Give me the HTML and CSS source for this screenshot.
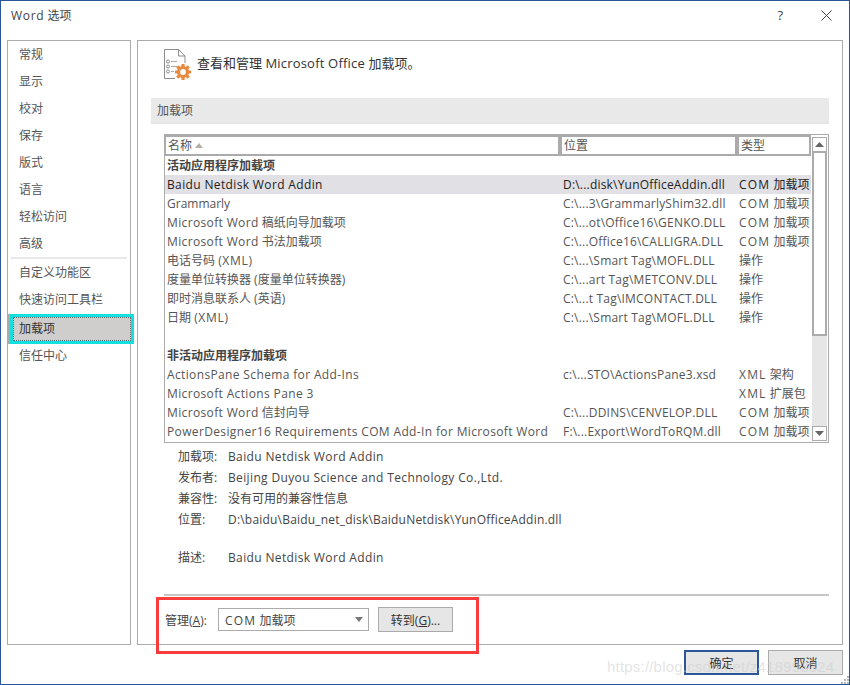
FILE: index.html
```html
<!DOCTYPE html>
<html lang="zh-CN">
<head>
<meta charset="utf-8">
<title>Word 选项</title>
<link rel="stylesheet" href="styles.css">
</head>
<body>
<div class="dialog">
  <header class="titlebar">
    <span class="title"><span class="wide">Word</span> 选项</span>
    <span class="help">?</span>
    <svg class="close" width="11" height="11" viewBox="0 0 11 11"><path d="M.5.5l10 10M10.500.5l-10 10" stroke="#444" stroke-width="1" fill="none"/></svg>
  </header>
  <div class="main">
    <nav class="nav">
      <div class="nav-item">常规</div>
      <div class="nav-item">显示</div>
      <div class="nav-item">校对</div>
      <div class="nav-item">保存</div>
      <div class="nav-item">版式</div>
      <div class="nav-item">语言</div>
      <div class="nav-item">轻松访问</div>
      <div class="nav-item">高级</div>
      <div class="nav-sep"></div>
      <div class="nav-item">自定义功能区</div>
      <div class="nav-item">快速访问工具栏</div>
      <div class="nav-active"><span class="nav-inner">加载项</span></div>
      <div class="nav-item">信任中心</div>
    </nav>
    <section class="content">
      <div class="head">
        <svg class="head-icon" width="30" height="32" viewBox="0 0 30 32">
          <path d="M11 29.500H.5V.5h14l6.500 6.500v7" fill="none" stroke="#8c8c8c"/>
          <path d="M14.500.5v6.500H21" fill="none" stroke="#8c8c8c"/>
          <path d="M7 12.500h6M7 17.500h6M7 22.500h3" stroke="#a8a8a8" fill="none"/>
          <circle cx="4" cy="12.500" r="1.500" fill="none" stroke="#8c8c8c"/>
          <circle cx="4" cy="17.500" r="1.500" fill="none" stroke="#8c8c8c"/>
          <circle cx="4" cy="22.500" r="1.500" fill="none" stroke="#8c8c8c"/>
          <path d="M19 15v16M11 23h16M13.300 17.300l11.400 11.400M24.700 17.300L13.300 28.700" stroke="#ea8a3e" stroke-width="3.200"/>
          <circle cx="19" cy="23" r="4.500" fill="none" stroke="#ea8a3e" stroke-width="3.200"/>
          <circle cx="19" cy="23" r="2.900" fill="#fff"/>
        </svg>
        <span class="head-text">查看和管理 <span class="en-soft">Microsoft Office</span> 加载项。</span>
      </div>
      <div class="section-bar">加载项</div>
      <div class="list">
        <div class="list-body">
          <div class="list-head">
            <span class="col-head">名称<svg class="sort" width="8" height="5" viewBox="0 0 8 5"><path d="M4 0l4 5H0z" fill="#b5b0a6"/></svg></span>
            <span class="col-head">位置</span>
            <span class="col-head">类型</span>
          </div>
          <div class="row group">活动应用程序加载项</div>
          <div class="row selected"><span class="en">Baidu Netdisk Word Addin</span><span>D:\...disk\YunOfficeAddin.dll</span><span><span class="caps">COM</span> 加载项</span></div>
          <div class="row"><span>Grammarly</span><span>C:\...3\GrammarlyShim32.dll</span><span><span class="caps">COM</span> 加载项</span></div>
          <div class="row"><span><span class="en">Microsoft Word</span> 稿纸向导加载项</span><span>C:\...ot\Office16\GENKO.DLL</span><span><span class="caps">COM</span> 加载项</span></div>
          <div class="row"><span><span class="en">Microsoft Word</span> 书法加载项</span><span>C:\...Office16\CALLIGRA.DLL</span><span><span class="caps">COM</span> 加载项</span></div>
          <div class="row"><span>电话号码 <span class="wide">(XML)</span></span><span>C:\...\Smart Tag\MOFL.DLL</span><span>操作</span></div>
          <div class="row"><span>度量单位转换器 (度量单位转换器)</span><span>C:\...art Tag\METCONV.DLL</span><span>操作</span></div>
          <div class="row"><span>即时消息联系人 (英语)</span><span>C:\...t Tag\IMCONTACT.DLL</span><span>操作</span></div>
          <div class="row"><span>日期 <span class="wide">(XML)</span></span><span>C:\...\Smart Tag\MOFL.DLL</span><span>操作</span></div>
          <div class="row"></div>
          <div class="row group">非活动应用程序加载项</div>
          <div class="row"><span class="en">ActionsPane Schema for Add-Ins</span><span>c:\...STO\ActionsPane3.xsd</span><span><span class="caps">XML</span> 架构</span></div>
          <div class="row"><span class="en">Microsoft Actions Pane 3</span><span></span><span><span class="caps">XML</span> 扩展包</span></div>
          <div class="row"><span><span class="en">Microsoft Word</span> 信封向导</span><span>C:\...DDINS\CENVELOP.DLL</span><span><span class="caps">COM</span> 加载项</span></div>
          <div class="row"><span class="en">PowerDesigner16 Requirements COM Add-In for Microsoft Word</span><span>F:\...Export\WordToRQM.dll</span><span><span class="caps">COM</span> 加载项</span></div>
        </div>
        <div class="scrollbar">
          <div class="sb-btn"><svg width="9" height="5" viewBox="0 0 9 5"><path d="M4.500 0L9 5H0z" fill="#666"/></svg></div>
          <div class="sb-thumb"></div>
          <div class="sb-track"></div>
          <div class="sb-btn"><svg width="9" height="5" viewBox="0 0 9 5"><path d="M0 0h9L4.500 5z" fill="#666"/></svg></div>
        </div>
      </div>
      <dl class="details">
        <div class="detail"><dt>加载项:</dt><dd class="en">Baidu Netdisk Word Addin</dd></div>
        <div class="detail"><dt>发布者:</dt><dd class="en">Beijing Duyou Science and Technology Co.,Ltd.</dd></div>
        <div class="detail"><dt>兼容性:</dt><dd>没有可用的兼容性信息</dd></div>
        <div class="detail"><dt>位置:</dt><dd class="en-soft">D:\baidu\Baidu_net_disk\BaiduNetdisk\YunOfficeAddin.dll</dd></div>
        <div class="detail detail-desc"><dt>描述:</dt><dd class="en">Baidu Netdisk Word Addin</dd></div>
      </dl>
      <div class="manage">
        <label class="manage-label">管理(<u>A</u>):</label>
        <div class="select"><span><span class="caps">COM</span> 加载项</span><svg width="8" height="5" viewBox="0 0 8 5"><path d="M0 0h8L4 5z" fill="#777"/></svg></div>
        <button class="btn go">转到(<u>G</u>)...</button>
      </div>
    </section>
  </div>
  <footer class="footer">
    <button class="btn action primary">确定</button>
    <button class="btn action">取消</button>
  </footer>
  <div class="annotation"></div>
  <div class="watermark">https://blog.csdn.net/z418993324</div>
  <svg class="grip" width="9" height="9" viewBox="0 0 9 9"><path d="M7 1h2v2H7zM4 4h2v2H4zM7 4h2v2H7zM1 7h2v2H1zM4 7h2v2H4zM7 7h2v2H7z" fill="#b8b8b8"/></svg>
</div>
</body>
</html>
```
FILE: styles.css
```css
* { box-sizing: border-box; }
html, body { margin: 0; padding: 0; }
body {
  width: 850px;
  height: 685px;
  overflow: hidden;
  background: #fff;
  font-family: "Open Sans", "Noto Sans CJK SC", sans-serif;
  font-size: 12px;
  color: #444;
}
.en { letter-spacing: .36px; }
.en-soft { letter-spacing: .2px; }
.wide { letter-spacing: .7px; }
.caps { letter-spacing: 1.2px; }
.dialog {
  position: relative;
  width: 850px;
  height: 685px;
  border: 1px solid #2b579a;
  display: flex;
  flex-direction: column;
  background: #fff;
}
.titlebar {
  height: 39px;
  flex: none;
  display: flex;
  align-items: center;
  padding: 0 17px 11px 10px;
}
.title { font-size: 12px; color: #444; flex: 1; }
.help { font-size: 13px; margin-right: 38px; color: #444; }
.close { display: block; }
.main {
  flex: none;
  height: 605px;
  display: flex;
  gap: 6px;
  padding: 0 6px;
}
.nav {
  width: 124px;
  border: 1px solid #ababab;
}
.nav-item {
  height: 27px;
  line-height: 27px;
  padding-left: 11px;
  color: #555;
}
.nav-sep { height: 2px; background: #e8e8e8; margin: 0 3px; }
.nav-active {
  height: 24px;
  margin: 4px -1px 1px 5px;
  outline: 3px solid #14dede;
  background: #d0cecd;
  box-shadow: -3px 0 0 3px #ababab;
}
.nav-inner {
  display: block;
  height: 100%;
  line-height: 22px;
  padding-left: 5px;
  border: 1px dotted #666;
  color: #333;
}
.content {
  width: 706px;
  border: 1px solid #ababab;
  display: flex;
  flex-direction: column;
  padding: 0 13px;
}
.head {
  height: 57px;
  flex: none;
  display: flex;
  align-items: flex-start;
  padding: 8px 0 0 13px;
}
.head-icon { display: block; flex: none; margin-right: 3px; }
.head-text { font-size: 13px; line-height: 28px; color: #333; }
.section-bar {
  height: 26px;
  flex: none;
  line-height: 25px;
  background: #e9e9e9;
  border-bottom: 1px solid #e2e2e2;
  padding-left: 6px;
  color: #555;
}
.list {
  width: 665px;
  height: 309px;
  flex: none;
  margin: 10px 0 0 13px;
  border: 1px solid #ababab;
  display: flex;
}
.list-body { width: 646px; flex: none; overflow: hidden; }
.list-head {
  height: 21px;
  display: grid;
  grid-template-columns: 392px 173px 70px;
  column-gap: 4px;
  background: #ababab;
  padding: 2px 2px 2px 1px;
}
.col-head {
  background: #fff;
  padding-left: 2px;
  line-height: 17px;
  color: #555;
  display: flex;
  align-items: center;
  gap: 3px;
}
.row {
  height: 19px;
  line-height: 19px;
  display: grid;
  grid-template-columns: 396px 176px 72px;
  padding-left: 2px;
  white-space: nowrap;
  color: #555;
}
.row > span { overflow: hidden; }
.row > span:nth-child(2) { letter-spacing: .2px; }
.row.group { display: block; font-weight: 700; color: #444; }
.row.selected { background: #e1e0e5; color: #222; }
.scrollbar {
  flex: 1;
  display: flex;
  flex-direction: column;
  padding: 2px 1px 1px 0;
  margin-left: 1px;
}
.sb-btn {
  height: 15px;
  flex: none;
  border: 1px solid #ababab;
  display: flex;
  align-items: center;
  justify-content: center;
  background: #fff;
}
.sb-thumb {
  height: 184px;
  flex: none;
  border: 2px solid #ababab;
  border-top-width: 1px;
  background: #fff;
}
.sb-track { flex: 1; background: #e6e6e6; }
.details {
  margin: 3px 0 0 27px;
  padding: 0;
}
.detail {
  height: 21px;
  line-height: 21px;
  display: flex;
}
.detail dt { width: 50px; }
.detail dd { margin: 0; }
.detail-desc { margin-top: 17px; }
.manage {
  height: 49px;
  flex: none;
  width: 665px;
  margin: 26px 0 0 13px;
  border-top: 2px solid #c6c6c6;
  display: flex;
  align-items: center;
  padding-left: 1px;
}
.manage-label { width: 53px; flex: none; }
.select {
  width: 151px;
  height: 23px;
  border: 1px solid #ababab;
  display: flex;
  align-items: center;
  justify-content: space-between;
  padding: 0 5px 0 6px;
  margin-right: 9px;
}
.btn {
  font: inherit;
  color: #333;
  background: #e6e6e6;
  border: 1px solid #ababab;
  padding: 0;
}
.go { width: 75px; height: 25px; }
.footer {
  flex: 1;
  display: flex;
  justify-content: flex-end;
  gap: 9px;
  padding: 5px 6px 0 0;
  align-items: flex-start;
}
.action { width: 75px; height: 25px; }
.primary { border: 2px solid #2b579a; }
.annotation {
  position: absolute;
  left: 155px;
  top: 596px;
  width: 323px;
  height: 57px;
  border: 3px solid #f93c3c;
}
.watermark {
  position: absolute;
  left: 606px;
  top: 656px;
  font-family: "Liberation Sans", sans-serif;
  font-size: 15px;
  line-height: 20px;
  letter-spacing: .2px;
  color: rgba(205, 205, 205, 0.55);
  white-space: nowrap;
}
.grip { position: absolute; right: 0; bottom: 0; }
```
